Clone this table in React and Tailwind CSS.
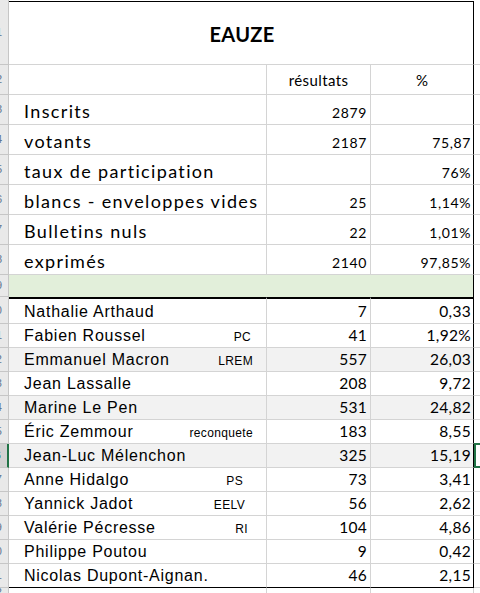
const GRID = 'border-[#d4d4d4]';

const topRows = [
  { label: 'Inscrits', n: '2879', p: '' },
  { label: 'votants', n: '2187', p: '75,87' },
  { label: 'taux de participation', n: '', p: '76%' },
  { label: 'blancs - enveloppes vides', n: '25', p: '1,14%' },
  { label: 'Bulletins nuls', n: '22', p: '1,01%' },
  { label: 'exprimés', n: '2140', p: '97,85%' },
];

const candidats = [
  { nom: 'Nathalie Arthaud', parti: '', pr: '', voix: '7', pct: '0,33' },
  { nom: 'Fabien Roussel', parti: 'PC', pr: 'pr-[15px]', voix: '41', pct: '1,92%' },
  { nom: 'Emmanuel Macron', parti: 'LREM', pr: 'pr-[13px]', voix: '557', pct: '26,03', grey: true },
  { nom: 'Jean Lassalle', parti: '', pr: '', voix: '208', pct: '9,72' },
  { nom: 'Marine Le Pen', parti: '', pr: '', voix: '531', pct: '24,82', grey: true },
  { nom: 'Éric Zemmour', parti: 'reconquete', pr: 'pr-[13px]', voix: '183', pct: '8,55' },
  { nom: 'Jean-Luc Mélenchon', parti: '', pr: '', voix: '325', pct: '15,19', grey: true, selected: true },
  { nom: 'Anne Hidalgo', parti: 'PS', pr: 'pr-[23px]', voix: '73', pct: '3,41' },
  { nom: 'Yannick Jadot', parti: 'EELV', pr: 'pr-[21px]', voix: '56', pct: '2,62' },
  { nom: 'Valérie Pécresse', parti: 'RI', pr: 'pr-[18px]', voix: '104', pct: '4,86' },
  { nom: 'Philippe Poutou', parti: '', pr: '', voix: '9', pct: '0,42' },
  { nom: 'Nicolas Dupont-Aignan.', parti: '', pr: '', voix: '46', pct: '2,15', last: true },
];

function RowHead({ num, active }) {
  return (
    <div
      className={
        'w-[9px] shrink-0 overflow-hidden flex items-center justify-end pr-[6px] border-b text-[11px] leading-none font-["Liberation_Sans"] ' +
        (active
          ? 'bg-[#d2d2d2] border-r-2 border-r-[#217346] border-b-[#c6c6c6] text-[#217346]'
          : 'bg-[#e9e9e9] border-r border-[#c6c6c6] text-[#5f7591]')
      }
    >
      {num}
    </div>
  );
}

export default function App() {
  return (
    <div className="w-[480px] h-[593px] overflow-hidden bg-white text-black font-['Lato',sans-serif] flex flex-col">
      {/* tail of the row above */}
      <div className="h-[1px] flex shrink-0">
        <div className="w-[9px] bg-[#e9e9e9] border-r border-[#c6c6c6]" />
      </div>

      {/* title */}
      <div className="h-[64px] flex shrink-0">
        <RowHead num="1" />
        <div className="w-[465px] shrink-0 border-t border-t-black border-b border-b-[#d4d4d4] border-r border-r-black flex items-center justify-center pt-[1px] pl-[2px]">
          <span className="text-[20px] font-bold leading-none tracking-[0.3px]">EAUZE</span>
        </div>
        <div className={'flex-1 border-b ' + GRID} />
      </div>

      {/* column headers */}
      <div className="h-[30px] flex shrink-0">
        <RowHead num="2" />
        <div className={'w-[258px] shrink-0 border-r border-b ' + GRID} />
        <div className={'w-[104px] shrink-0 border-r border-b flex items-end justify-center pb-[6px] text-[15px] leading-none tracking-[0.4px] ' + GRID}>
          résultats
        </div>
        <div className={'w-[103px] shrink-0 border-b border-r border-r-black flex items-end justify-center pb-[6px] text-[15px] leading-none ' + GRID}>
          %
        </div>
        <div className={'flex-1 border-b ' + GRID} />
      </div>

      {topRows.map((r, i) => (
        <div key={r.label} className="h-[30px] flex shrink-0">
          <RowHead num={String(i + 3)} />
          <div className={'w-[258px] shrink-0 border-r border-b flex items-end pl-[15px] pb-[4px] text-[18px] leading-none tracking-[1.35px] whitespace-nowrap ' + GRID}>
            {r.label}
          </div>
          <div className={'w-[104px] shrink-0 border-r border-b flex items-end justify-end pr-[3px] pb-[4px] text-[14px] leading-none tracking-[0.6px] ' + GRID}>
            {r.n}
          </div>
          <div className={'w-[103px] shrink-0 border-b border-r border-r-black flex items-end justify-end pr-[2px] pb-[4px] text-[14px] leading-none tracking-[0.6px] ' + GRID}>
            {r.p}
          </div>
          <div className={'flex-1 border-b ' + GRID} />
        </div>
      ))}

      {/* green separator */}
      <div className="h-[22px] flex shrink-0">
        <RowHead num="9" />
        <div className="w-[465px] shrink-0 bg-[#e2efda] border-r border-r-black" />
        <div className="flex-1" />
      </div>

      {/* candidates */}
      {candidats.map((c, i) => (
        <div key={c.nom} className={'flex shrink-0 ' + (i === 0 ? 'h-[27px]' : 'h-[24px]')}>
          <RowHead num={String(i + 10)} active={c.selected} />
          <div
            className={
              'w-[258px] shrink-0 border-r flex items-end justify-between pl-[15px] pb-[3px] font-["Liberation_Sans"] whitespace-nowrap ' +
              (i === 0 ? 'border-t-2 border-t-black ' : '') +
              (c.last ? 'border-b border-b-black border-r-[#d4d4d4] ' : 'border-b border-[#d4d4d4] ') +
              (c.grey ? 'bg-[#f2f2f2]' : 'bg-white')
            }
          >
            <span className="text-[16px] leading-none tracking-[0.75px]">{c.nom}</span>
            {c.parti && (
              <span className={'text-[12px] leading-none tracking-[0.35px] mb-[1px] ' + c.pr}>{c.parti}</span>
            )}
          </div>
          <div
            className={
              'w-[104px] shrink-0 border-r flex items-end justify-end pr-[3px] pb-[4px] text-[15.5px] leading-none tracking-[0.3px] ' +
              (i === 0 ? 'border-t-2 border-t-black ' : '') +
              (c.last ? 'border-b border-b-black border-r-[#d4d4d4] ' : 'border-b border-[#d4d4d4] ') +
              (c.grey ? 'bg-[#f2f2f2]' : 'bg-white')
            }
          >
            {c.voix}
          </div>
          <div
            className={
              'w-[103px] shrink-0 border-r border-r-black flex items-end justify-end pr-[2px] pb-[4px] text-[15.5px] leading-none tracking-[0.3px] ' +
              (i === 0 ? 'border-t-2 border-t-black ' : '') +
              (c.last ? 'border-b border-b-black ' : 'border-b border-b-[#d4d4d4] ') +
              (c.grey ? 'bg-[#f2f2f2]' : 'bg-white')
            }
          >
            {c.pct}
          </div>
          <div className={'flex-1 border-b relative ' + GRID}>
            {c.selected && <div className="absolute -top-px left-0 -right-2 -bottom-px border-2 border-[#217346]" />}
          </div>
        </div>
      ))}

      {/* next empty row */}
      <div className="h-[10px] flex shrink-0">
        <RowHead num="22" />
        <div className={'w-[258px] shrink-0 border-r ' + GRID} />
        <div className={'w-[104px] shrink-0 border-r ' + GRID} />
        <div className={'w-[103px] shrink-0 border-r ' + GRID} />
        <div className="flex-1" />
      </div>
    </div>
  );
}
